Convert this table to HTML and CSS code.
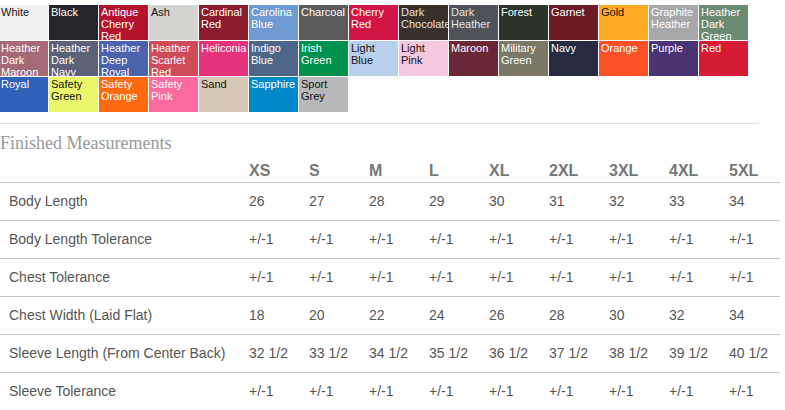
FILE: index.html
```html
<!DOCTYPE html>
<html>
<head>
<meta charset="utf-8">
<link rel="stylesheet" href="styles.css">
</head>
<body>
<div class="swatches">
  <div class="sw dark-text" style="background:#f1f1f1">White</div>
  <div class="sw" style="background:#25252b">Black</div>
  <div class="sw" style="background:#b5122e">Antique Cherry Red</div>
  <div class="sw dark-text" style="background:#d6d4d1">Ash</div>
  <div class="sw" style="background:#8a1c2e">Cardinal Red</div>
  <div class="sw" style="background:#6f9bd3">Carolina Blue</div>
  <div class="sw" style="background:#5b5a5c">Charcoal</div>
  <div class="sw" style="background:#d31546">Cherry Red</div>
  <div class="sw light-text" style="background:#3a302b">Dark Chocolate</div>
  <div class="sw light-text" style="background:#4f5258">Dark Heather</div>
  <div class="sw" style="background:#2c3329">Forest</div>
  <div class="sw" style="background:#6d1a25">Garnet</div>
  <div class="sw dark-text" style="background:#fbaa22">Gold</div>
  <div class="sw" style="background:#a8a8aa">Graphite Heather</div>
  <div class="sw" style="background:#6a8a72">Heather Dark Green</div>

  <div class="sw" style="background:#a56a78">Heather Dark Maroon</div>
  <div class="sw" style="background:#5d6178">Heather Dark Navy</div>
  <div class="sw" style="background:#4b62ad">Heather Deep Royal</div>
  <div class="sw" style="background:#cf4b57">Heather Scarlet Red</div>
  <div class="sw" style="background:#e3337b">Heliconia</div>
  <div class="sw" style="background:#4d6687">Indigo Blue</div>
  <div class="sw" style="background:#00914e">Irish Green</div>
  <div class="sw dark-text" style="background:#b8d0ec">Light Blue</div>
  <div class="sw dark-text" style="background:#f6c8e0">Light Pink</div>
  <div class="sw" style="background:#6a2837">Maroon</div>
  <div class="sw" style="background:#7c7868">Military Green</div>
  <div class="sw" style="background:#272a40">Navy</div>
  <div class="sw" style="background:#fc5127">Orange</div>
  <div class="sw" style="background:#4a3572">Purple</div>
  <div class="sw" style="background:#d51c34">Red</div>

  <div class="sw" style="background:#2f62b8">Royal</div>
  <div class="sw dark-text" style="background:#ebf76a">Safety Green</div>
  <div class="sw" style="background:#fe6a0e">Safety Orange</div>
  <div class="sw" style="background:#fb6a9e">Safety Pink</div>
  <div class="sw dark-text" style="background:#d6c8b4">Sand</div>
  <div class="sw" style="background:#0188c8">Sapphire</div>
  <div class="sw dark-text" style="background:#b9b9b9">Sport Grey</div>
</div>

<hr class="divider">

<h3 class="title">Finished Measurements</h3>

<table class="sizes">
  <colgroup>
    <col class="c-label">
    <col class="c-size"><col class="c-size"><col class="c-size"><col class="c-size"><col class="c-size"><col class="c-size"><col class="c-size"><col class="c-size"><col class="c-size">
  </colgroup>
  <thead>
    <tr><th></th><th>XS</th><th>S</th><th>M</th><th>L</th><th>XL</th><th>2XL</th><th>3XL</th><th>4XL</th><th>5XL</th></tr>
  </thead>
  <tbody>
    <tr><td>Body Length</td><td>26</td><td>27</td><td>28</td><td>29</td><td>30</td><td>31</td><td>32</td><td>33</td><td>34</td></tr>
    <tr><td>Body Length Tolerance</td><td>+/-1</td><td>+/-1</td><td>+/-1</td><td>+/-1</td><td>+/-1</td><td>+/-1</td><td>+/-1</td><td>+/-1</td><td>+/-1</td></tr>
    <tr><td>Chest Tolerance</td><td>+/-1</td><td>+/-1</td><td>+/-1</td><td>+/-1</td><td>+/-1</td><td>+/-1</td><td>+/-1</td><td>+/-1</td><td>+/-1</td></tr>
    <tr><td>Chest Width (Laid Flat)</td><td>18</td><td>20</td><td>22</td><td>24</td><td>26</td><td>28</td><td>30</td><td>32</td><td>34</td></tr>
    <tr><td>Sleeve Length (From Center Back)</td><td>32 1/2</td><td>33 1/2</td><td>34 1/2</td><td>35 1/2</td><td>36 1/2</td><td>37 1/2</td><td>38 1/2</td><td>39 1/2</td><td>40 1/2</td></tr>
    <tr><td>Sleeve Tolerance</td><td>+/-1</td><td>+/-1</td><td>+/-1</td><td>+/-1</td><td>+/-1</td><td>+/-1</td><td>+/-1</td><td>+/-1</td><td>+/-1</td></tr>
  </tbody>
</table>
</body>
</html>
```

FILE: styles.css
```css
html, body {
  margin: 0;
  padding: 0;
  background: #ffffff;
}

body {
  font-family: "Liberation Sans", Arial, sans-serif;
  overflow: hidden;
}

.swatches {
  display: grid;
  grid-template-columns: repeat(15, 49px);
  grid-auto-rows: 35px;
  gap: 1px;
  margin: 5px 0 0 -1px;
}

.sw {
  overflow: hidden;
  color: #ffffff;
  font-size: 11px;
  line-height: 12px;
  padding: 1px 0 0 2px;
  box-sizing: border-box;
}

.sw.dark-text {
  color: #111111;
}

.sw.light-text {
  color: #e4e4e4;
}

.divider {
  border: 0;
  border-top: 1px solid #dedede;
  width: 759px;
  margin: 11px 0 0 0;
  height: 0;
}

.title {
  font-family: "Liberation Serif", "Times New Roman", serif;
  font-weight: normal;
  font-size: 18px;
  line-height: 22px;
  color: #999999;
  margin: 8px 0 0 0;
}

.sizes {
  width: 780px;
  table-layout: fixed;
  border-collapse: separate;
  border-spacing: 0;
}

.c-label {
  width: 240px;
}

.c-size {
  width: 60px;
}

.sizes th {
  text-align: left;
  font-size: 16px;
  font-weight: bold;
  line-height: 20px;
  color: #777777;
  padding: 7px 0 1px 9px;
  border-bottom: 1px solid #c6c6c6;
  white-space: nowrap;
}

.sizes td {
  font-size: 14px;
  line-height: 17px;
  color: #555555;
  padding: 10px 0 10px 9px;
  border-bottom: 1px solid #c6c6c6;
  white-space: nowrap;
}
```
